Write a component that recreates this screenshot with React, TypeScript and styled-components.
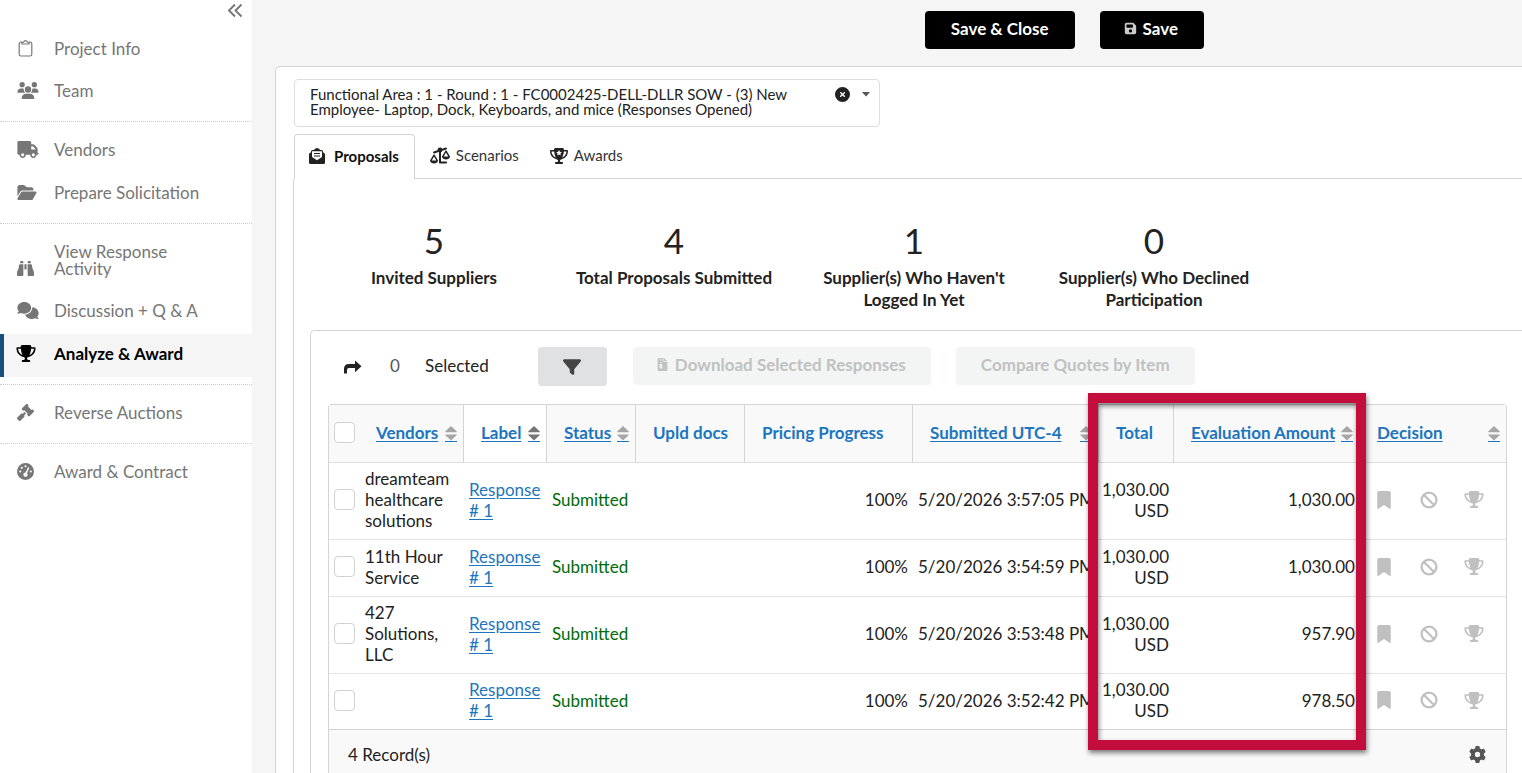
import React from "react";
import styled, { createGlobalStyle, css } from "styled-components";
import {
  FaUsers, FaTruck, FaFolderOpen, FaBinoculars, FaComments, FaTrophy, FaGavel, FaGaugeHigh,
  FaFloppyDisk, FaCircleXmark, FaFilter, FaBookmark, FaGear, FaScaleUnbalanced, FaFileZipper,
} from "react-icons/fa6";

const Global = createGlobalStyle`
  *, *::before, *::after { box-sizing: border-box; }
  body { margin: 0; background: #f5f5f5; color: #222; font: 17px/21px Lato, "Liberation Sans", sans-serif; overflow-x: hidden; }
  button { font: inherit; cursor: pointer; }
`;

const Page = styled.div`
  display: flex;
  min-height: 100vh;
`;

/* ---------- Sidebar ---------- */
const Sidebar = styled.aside`
  position: relative;
  flex: 0 0 252px;
  background: #fff;
  padding-top: 28px;
`;
const Collapse = styled.button`
  position: absolute;
  top: 3px;
  right: 9px;
  display: flex;
  padding: 0;
  border: 0;
  background: none;
  color: #767676;
`;
const NavGroup = styled.nav`
  padding: 0 0 7px;
  & + & {
    border-top: 1px dotted #ccc;
    padding-top: 8px;
  }
`;
const NavLink = styled.a<{ $active?: boolean }>`
  display: grid;
  grid-template-columns: 37px 1fr;
  align-items: end;
  align-content: start;
  min-height: 43px;
  padding: 11px 48px 14px 17px;
  color: #767676;
  line-height: 17px;
  text-decoration: none;
  svg { display: block; }
  ${(p) => p.$active && css`
    grid-template-columns: 38px 1fr;
    background: #f5f5f5;
    border-left: 4px solid #184f7d;
    padding-left: 12px;
    color: #000;
    font-weight: 700;
  `}
`;

/* ---------- Main area ---------- */
const Main = styled.main`
  flex: 1;
  min-width: 0;
  display: flex;
  flex-direction: column;
  padding-left: 23px;
`;
const Actions = styled.div`
  display: flex;
  justify-content: flex-end;
  gap: 25px;
  padding: 11px 318px 17px 0;
`;
const BlackButton = styled.button`
  display: flex;
  align-items: center;
  gap: 6px;
  height: 38px;
  padding: 0 26px 3px;
  border: 0;
  border-radius: 4px;
  background: #000;
  color: #fff;
  font-weight: 700;
  svg { opacity: 0.8; }
`;
const SaveButton = styled(BlackButton)`
  padding: 0 26px 3px 24px;
`;
const Panel = styled.section`
  flex: 1;
  display: flex;
  flex-direction: column;
  padding: 12px 0 0 18px;
  border: 1px solid #d4d4d5;
  border-width: 1px 0 0 1px;
  border-radius: 5px 0 0 0;
  background: #fff;
`;
const RoundPicker = styled.div`
  display: flex;
  align-items: flex-start;
  width: 586px;
  height: 48px;
  padding: 7px 8px 7px 15px;
  border: 1px solid #dededf;
  border-radius: 4px;
  font-size: 15px;
  line-height: 15px;
`;
const RoundText = styled.div`
  flex: 1;
  padding-right: 32px;
`;
const IconButton = styled.button`
  display: flex;
  align-items: center;
  justify-content: center;
  padding: 0;
  border: 0;
  background: none;
  color: inherit;
`;
const PickerIcons = styled.div`
  display: flex;
  align-items: center;
  gap: 11px;
`;
const Tabs = styled.div`
  display: flex;
  margin-top: 7px;
  border-bottom: 1px solid #d4d4d5;
`;
const Tab = styled.button<{ $active?: boolean }>`
  display: flex;
  align-items: center;
  gap: 6px;
  height: 44px;
  margin-bottom: -1px;
  padding: 0 15px 2px 14px;
  border: 1px solid transparent;
  border-bottom: 0;
  border-radius: 4px 4px 0 0;
  background: none;
  color: #333;
  font-size: 15px;
  svg { color: #222; }
  ${(p) => p.$active && css`
    height: 45px;
    gap: 9px;
    border-color: #d4d4d5;
    background: #fff;
    color: #111;
    font-weight: 700;
  `}
`;
const TabBody = styled.div`
  flex: 1;
  display: flex;
  flex-direction: column;
  margin-left: -1px;
  padding: 40px 0 0 16px;
  border-left: 1px solid #d4d4d5;
`;
const Stats = styled.dl`
  display: grid;
  grid-template-columns: repeat(4, 240px);
  margin: 0;
  padding-left: 4px;
  height: 111px;
`;
const Stat = styled.div`
  display: flex;
  flex-direction: column-reverse;
  justify-content: flex-end;
  text-align: center;
  padding: 0 20px;
  dt { font-weight: 700; line-height: 22px; }
  dd { margin: 0 0 6px; font-size: 35px; line-height: 42px; }
`;
const GridPanel = styled.section`
  flex: 1;
  padding: 16px 15px 0 17px;
  border: 1px solid #d4d4d5;
  border-width: 1px 0 0 1px;
  border-radius: 5px 0 0 0;
`;
const Toolbar = styled.div`
  display: flex;
  align-items: center;
  height: 39px;
  padding-left: 16px;
  > span { padding-bottom: 2px; }
`;
const Count = styled.span`
  width: 35px;
  margin-left: 28px;
  color: #555;
`;
const FilterButton = styled.button`
  display: flex;
  align-items: center;
  justify-content: center;
  width: 69px;
  height: 39px;
  margin: 0 1px 0 49px;
  border: 0;
  border-radius: 4px;
  background: #e0e1e2;
  color: #444;
`;
const DisabledButton = styled.button`
  display: flex;
  align-items: center;
  gap: 6px;
  height: 38px;
  margin: 0 0 1px 25px;
  padding: 0 25px 3px;
  border: 0;
  border-radius: 4px;
  background: #f3f5f4;
  color: #c0c1c1;
  font-weight: 700;
`;
const DownloadButton = styled(DisabledButton)`
  padding-left: 23px;
`;

/* ---------- Table ---------- */
const TableFrame = styled.div`
  position: relative;
  margin-top: 18px;
  border: 1px solid #d4d4d5;
  border-bottom: 0;
  border-radius: 4px 4px 0 0;
`;
const Table = styled.table`
  width: 100%;
  table-layout: fixed;
  border-collapse: separate;
  border-spacing: 0;
`;
const HeadCell = styled.th<{ $active?: boolean; $divider?: boolean }>`
  height: 58px;
  padding: 0 6px 3px 17px;
  background: ${(p) => (p.$active ? "#fff" : "#f9f9f9")};
  border-bottom: 1px solid #dfdfe0;
  border-left: ${(p) => (p.$divider ? "1px solid #d4d4d5" : "0")};
  color: #1c75bf;
  text-align: left;
  white-space: nowrap;
`;
const HeadRow = styled.div`
  display: flex;
  align-items: center;
  justify-content: space-between;
  a { color: inherit; text-underline-offset: 2px; }
`;
const SortButton = styled.button<{ $dark?: boolean }>`
  display: flex;
  margin-top: 4px;
  padding: 0;
  border: 0;
  border-bottom: 1px solid #1c75bf;
  background: none;
  color: ${(p) => (p.$dark ? "#767676" : "#a6a6a6")};
`;
const Row = styled.tr`
  height: 57px;
  &:last-child { height: 55px; }
  &:last-child td { border-bottom: 0; }
`;
const Cell = styled.td<{ $right?: boolean; $green?: boolean; $nowrap?: boolean }>`
  padding: ${(p) => (p.$right ? "5px 4px 8px" : "5px 4px 8px 6px")};
  border-bottom: 1px solid #e4e4e5;
  text-align: ${(p) => (p.$right ? "right" : "left")};
  color: ${(p) => (p.$green ? "#016b09" : "inherit")};
  white-space: ${(p) => (p.$nowrap ? "nowrap" : "normal")};
  a { color: #1c75bf; text-underline-offset: 2px; }
`;
const Check = styled.input`
  appearance: none;
  display: block;
  width: 21px;
  height: 21px;
  margin: 0;
  border: 1px solid #d0d1d2;
  border-radius: 4px;
  background: #fff;
`;
const CheckCell = styled(Cell)`
  padding: 0 0 3px 5px;
`;
const CheckHead = styled(HeadCell)`
  padding: 0 0 3px 5px;
`;
const DecisionCell = styled(Cell)`
  padding: 0 0 3px 2px;
`;
const Decisions = styled.div`
  display: grid;
  grid-template-columns: repeat(3, 45px);
  justify-items: center;
  color: #c0c0c0;
`;
const Footer = styled.div`
  display: flex;
  align-items: center;
  justify-content: space-between;
  height: 44px;
  padding: 5px 20px 0 19px;
  border-top: 1px solid #d4d4d5;
  background: #f9f9f9;
  svg { color: #555; }
`;
const Highlight = styled.div`
  position: absolute;
  top: -12px;
  bottom: 23px;
  left: 759px;
  width: 278px;
  border: 10px solid #c30d3c;
  box-shadow: 1px 3px 5px rgba(0, 0, 0, 0.5), inset 1px 3px 5px rgba(0, 0, 0, 0.5);
  pointer-events: none;
`;

/* ---------- Drawn icons ---------- */
const ClipboardIcon = () => (
  <svg width="18" height="18" viewBox="0 0 18 18" fill="none" stroke="currentColor" strokeWidth="1.2">
    <path d="M5 3H4A1.800 1.800 0 0 0 2.200 4.800V15.200A1.800 1.800 0 0 0 4 17h9a1.800 1.800 0 0 0 1.800-1.800V4.800A1.800 1.800 0 0 0 13 3h-1" />
    <path d="M4.800 5h7.400V3.700L10.200 2.900A1.800 1.800 0 0 0 6.800 2.900L4.800 3.700Z" strokeLinejoin="round" />
  </svg>
);
const DoubleChevron = () => (
  <svg width="16" height="16" viewBox="0 0 16 16" fill="none" stroke="currentColor" strokeWidth="1.900">
    <path d="M8 1.500 2 7.500l6 6M14.500 1.500l-6 6 6 6" />
  </svg>
);
const SortIcon = () => (
  <svg width="12" height="15" viewBox="0 0 12 15" fill="currentColor">
    <path d="M6 0 11.600 5.300a.5.5 0 0 1-.4.9H.8a.5.5 0 0 1-.4-.9ZM6 14.600.4 9.300a.5.5 0 0 1 .4-.9h10.400a.5.5 0 0 1 .4.9Z" />
  </svg>
);
const ForwardIcon = () => (
  <svg width="18" height="14" viewBox="0 0 18 14" fill="currentColor">
    <path d="M0 13.500V8.500a4.500 4.500 0 0 1 4.500-4.500H11V0.500L17.500 6.300 11 12.200V8H5a2 2 0 0 0-2 2v3.500Z" />
  </svg>
);
const BanIcon = () => (
  <svg width="18" height="18" viewBox="0 0 18 18" fill="none" stroke="currentColor" strokeWidth="2.300">
    <circle cx="9" cy="9" r="7.400" />
    <path d="M3.800 3.800 14.200 14.200" />
  </svg>
);
const OpenLetterIcon = () => (
  <svg width="16" height="16" viewBox="0 0 16 16" fill="currentColor" fillRule="evenodd">
    <path d="M6.500.6a2.500 2.500 0 0 1 3 0L11.300 2H12.500A1.500 1.500 0 0 1 14 3.500V4.200L15.400 5.300A1.500 1.500 0 0 1 16 6.500V14.500A1.500 1.500 0 0 1 14.500 16H1.500A1.500 1.500 0 0 1 0 14.500V6.500A1.500 1.500 0 0 1 .6 5.300L2 4.200V3.500A1.500 1.500 0 0 1 3.500 2H4.700ZM3 3.200V8.900L8 12.200 13 8.900V3.200ZM5 5h6v1.100H5ZM5 7.400h6v1.100H5Z" />
  </svg>
);
const StarTrophyIcon = () => (
  <svg width="18" height="16" viewBox="0 0 576 512" fill="currentColor" fillRule="evenodd">
    <path d="M400 0H176c-27 0-48 22-47 48l1 16H24C11 64 0 75 0 88c0 93 33 157 78 201 45 43 100 65 143 77 25 7 35 20 35 42 0 22-18 40-40 40h-24c-18 0-32 14-32 32s14 32 32 32h192c18 0 32-14 32-32s-14-32-32-32h-24c-22 0-40-18-40-40 0-22 10-35 35-42 43-12 98-34 143-77 45-44 78-108 78-201 0-13-11-24-24-24H446l1-16c1-26-20-48-47-48ZM49 112h84c9 91 30 150 53 189-25-10-52-25-75-47-32-32-58-77-62-142Zm394 0h84c-4 65-30 110-62 142-23 22-50 37-75 47 23-39 44-98 53-189ZM288 66l28 57 63 9-46 45 11 62-56-29-56 29 11-62-46-45 63-9Z" />
  </svg>
);

const WideIcon = styled.span`
  display: flex;
  svg { width: 22px; height: 17px; }
`;
const MidIcon = styled.span`
  display: flex;
  svg { width: 20px; height: 17px; }
`;

type NavItem = { label: string; icon: React.ReactNode; active?: boolean };
const nav: NavItem[][] = [
  [
    { label: "Project Info", icon: <ClipboardIcon /> },
    { label: "Team", icon: <WideIcon><FaUsers /></WideIcon> },
  ],
  [
    { label: "Vendors", icon: <WideIcon><FaTruck /></WideIcon> },
    { label: "Prepare Solicitation", icon: <MidIcon><FaFolderOpen /></MidIcon> },
  ],
  [
    { label: "View Response Activity", icon: <FaBinoculars size={17} /> },
    { label: "Discussion + Q & A", icon: <WideIcon><FaComments /></WideIcon> },
    { label: "Analyze & Award", icon: <MidIcon><FaTrophy /></MidIcon>, active: true },
  ],
  [{ label: "Reverse Auctions", icon: <FaGavel size={17} /> }],
  [{ label: "Award & Contract", icon: <FaGaugeHigh size={17} /> }],
];

const stats = [
  ["5", "Invited Suppliers"],
  ["4", "Total Proposals Submitted"],
  ["1", "Supplier(s) Who Haven't Logged In Yet"],
  ["0", "Supplier(s) Who Declined Participation"],
];

const columns: { label: string; width?: number; sort?: boolean }[] = [
  { label: "Vendors", width: 104, sort: true },
  { label: "Label", width: 83, sort: true },
  { label: "Status", width: 89, sort: true },
  { label: "Upld docs", width: 109 },
  { label: "Pricing Progress", width: 168 },
  { label: "Submitted UTC-4", width: 186, sort: true },
  { label: "Total", width: 75 },
  { label: "Evaluation Amount", width: 186, sort: true },
  { label: "Decision", sort: true },
];

const rows = [
  { vendor: "dreamteam healthcare solutions", time: "5/20/2026 3:57:05 PM", amount: "1,030.00" },
  { vendor: "11th Hour Service", time: "5/20/2026 3:54:59 PM", amount: "1,030.00" },
  { vendor: "427 Solutions, LLC", time: "5/20/2026 3:53:48 PM", amount: "957.90" },
  { vendor: "", time: "5/20/2026 3:52:42 PM", amount: "978.50" },
];

export default function App() {
  return (
    <>
      <Global />
      <Page>
        <Sidebar>
          <Collapse aria-label="Collapse menu"><DoubleChevron /></Collapse>
          {nav.map((group, i) => (
            <NavGroup key={i}>
              {group.map((item) => (
                <NavLink key={item.label} href="#" $active={item.active}>
                  {item.icon}
                  <span>{item.label}</span>
                </NavLink>
              ))}
            </NavGroup>
          ))}
        </Sidebar>
        <Main>
          <Actions>
            <BlackButton>Save &amp; Close</BlackButton>
            <SaveButton><FaFloppyDisk size={13} />Save</SaveButton>
          </Actions>
          <Panel>
            <RoundPicker>
              <RoundText>
                Functional Area : 1 - Round : 1 - FC0002425-DELL-DLLR SOW - (3) New Employee- Laptop, Dock, Keyboards, and mice (Responses Opened)
              </RoundText>
              <PickerIcons>
                <IconButton aria-label="Clear"><FaCircleXmark size={15} /></IconButton>
                <IconButton aria-label="Open list">
                  <svg width="10" height="5" viewBox="0 0 10 5" fill="#555"><path d="M1 0h8L5 4.500Z" /></svg>
                </IconButton>
              </PickerIcons>
            </RoundPicker>
            <Tabs role="tablist">
              <Tab role="tab" aria-selected $active><OpenLetterIcon />Proposals</Tab>
              <Tab role="tab"><MidIcon><FaScaleUnbalanced /></MidIcon>Scenarios</Tab>
              <Tab role="tab"><StarTrophyIcon />Awards</Tab>
            </Tabs>
            <TabBody>
              <Stats>
                {stats.map(([value, label]) => (
                  <Stat key={label}>
                    <dt>{label}</dt>
                    <dd>{value}</dd>
                  </Stat>
                ))}
              </Stats>
              <GridPanel>
                <Toolbar>
                  <IconButton aria-label="Apply to selected"><ForwardIcon /></IconButton>
                  <Count>0</Count>
                  <span>Selected</span>
                  <FilterButton aria-label="Filter"><FaFilter size={18} /></FilterButton>
                  <DownloadButton disabled><FaFileZipper size={13} />Download Selected Responses</DownloadButton>
                  <DisabledButton disabled>Compare Quotes by Item</DisabledButton>
                </Toolbar>
                <TableFrame>
                  <Table>
                    <colgroup>
                      <col width={30} />
                      {columns.map((c) => <col key={c.label} width={c.width} />)}
                    </colgroup>
                    <thead>
                      <tr>
                        <CheckHead><Check type="checkbox" aria-label="Select all" /></CheckHead>
                        {columns.map((c, i) => (
                          <HeadCell key={c.label} $active={c.label === "Label"} $divider={i > 0}>
                            <HeadRow>
                              {c.sort ? <a href="#">{c.label}</a> : c.label}
                              {c.sort && (
                                <SortButton aria-label={`Sort by ${c.label}`} $dark={c.label === "Label"}><SortIcon /></SortButton>
                              )}
                            </HeadRow>
                          </HeadCell>
                        ))}
                      </tr>
                    </thead>
                    <tbody>
                      {rows.map((r) => (
                        <Row key={r.time}>
                          <CheckCell><Check type="checkbox" aria-label={`Select ${r.vendor}`} /></CheckCell>
                          <Cell>{r.vendor}</Cell>
                          <Cell><a href="#">Response # 1</a></Cell>
                          <Cell $green>Submitted</Cell>
                          <Cell />
                          <Cell $right>100%</Cell>
                          <Cell $nowrap>{r.time}</Cell>
                          <Cell $right>1,030.00 USD</Cell>
                          <Cell $right>{r.amount}</Cell>
                          <DecisionCell>
                            <Decisions>
                              <IconButton aria-label="Bookmark"><FaBookmark size={18} /></IconButton>
                              <IconButton aria-label="Reject"><BanIcon /></IconButton>
                              <IconButton aria-label="Award"><MidIcon><FaTrophy /></MidIcon></IconButton>
                            </Decisions>
                          </DecisionCell>
                        </Row>
                      ))}
                    </tbody>
                  </Table>
                  <Footer>
                    <span>4 Record(s)</span>
                    <IconButton aria-label="Table settings"><FaGear size={17} /></IconButton>
                  </Footer>
                  <Highlight />
                </TableFrame>
              </GridPanel>
            </TabBody>
          </Panel>
        </Main>
      </Page>
    </>
  );
}
